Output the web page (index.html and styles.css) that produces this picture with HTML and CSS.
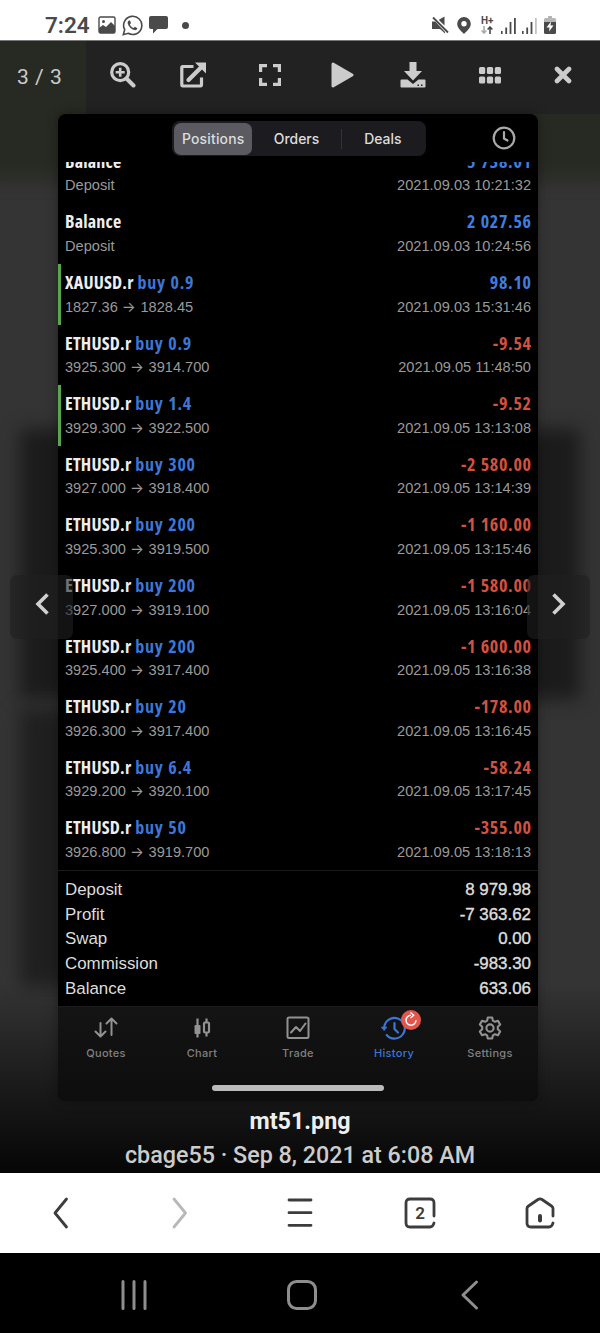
FILE: index.html
```html
<!DOCTYPE html>
<html lang="en">
<head>
    <meta charset="UTF-8">
    <meta name="viewport" content="width=device-width, initial-scale=1.0">
    <title>mt51.png</title>
    <link rel="stylesheet" href="styles.css">
</head>
<body>
    <div class="screen">
        <header class="status-bar">
            <span class="clock">7:24</span>
            <svg class="st-image" width="18" height="18" viewBox="0 0 18 18"><rect x="1" y="1" width="16" height="16" rx="1.5" fill="none" stroke="#4a4a4a" stroke-width="1.4"/><circle cx="5.5" cy="5.5" r="1.5"/><path d="M1 12l4-3 3 2 5-5 4 4v7H1z"/></svg>
            <svg class="st-whatsapp" width="21" height="21" viewBox="0 0 21 21"><path d="M1.3 19.7l1.4-5A9.1 9.1 0 1 1 6.200 18.300z" fill="none" stroke="#4a4a4a" stroke-width="1.6"/><path d="M7 5.500c-1 .5-1.700 1.700-1.200 3.200 1 3 3.500 5.600 6.500 6.400 1.500.4 2.800-.4 3.100-1.800l-2.500-1.500-1.300 1.300c-1.700-.8-3-2-3.700-3.700l1.100-1.300L8 5.500z"/></svg>
            <svg class="st-chat" width="19" height="18" viewBox="0 0 19 18"><path d="M2 0h15q2 0 2 2v9q0 2-2 2H8.500L4 17.500V13H2q-2 0-2-2V2q0-2 2-2z"/></svg>
            <span class="dot"></span>
            <div class="status-right">
                <svg class="st-mute" width="17" height="18" viewBox="0 0 17 18"><path d="M0 5.500h4L13 15v2.500l-5-4.500H0zM6.500 4L12.500 .5v9z"/><path d="M1 .5l15 16" stroke="#fff" stroke-width="3.600"/><path d="M1 1.500l15 15" stroke="#4a4a4a" stroke-width="1.800"/></svg>
                <svg class="st-pin" width="14" height="17" viewBox="0 0 14 17"><path fill-rule="evenodd" d="M7 0a6.800 6.800 0 0 1 6.800 6.800C13.800 11 10 14 7 17 4 14 .2 11 .2 6.800A6.800 6.800 0 0 1 7 0zm0 4a2.700 2.700 0 1 0 0 5.400A2.700 2.700 0 0 0 7 4z"/></svg>
                <div class="net">
                    <span>H+</span>
                    <svg width="12" height="8" viewBox="0 0 12 8" fill="none" stroke-width="1.600"><path d="M3 0v7M.6 4.500L3 7l2.400-2.500" stroke="#aaa"/><path d="M9 8V1M6.600 3.500L9 1l2.400 2.500" stroke="#4a4a4a"/></svg>
                </div>
                <svg class="st-sig" width="15" height="17" viewBox="0 0 15 17"><path d="M0 14h1.600v3H0zM4.300 10.500h1.800v6.500h-1.800zM8.600 5h1.800v12h-1.800zM13 1h1.800v16H13z"/></svg>
                <svg class="st-sig" width="15" height="17" viewBox="0 0 15 17"><path d="M0 14h1.600v3H0zM4.300 10.500h1.800v6.500h-1.800zM8.600 5h1.800v12h-1.800z"/><path d="M13 1h1.800v16H13z" fill="#c4c4c4"/></svg>
                <svg class="st-battery" width="12" height="18" viewBox="0 0 12 18"><path d="M4 0h4v2h2.500Q12 2 12 3.500V7H0V3.500Q0 2 1.500 2H4z" fill="#b5b5b5"/><path d="M0 6h12v10.500q0 1.500-1.500 1.500h-9Q0 18 0 16.500z"/><path d="M7 5.500L2.500 11.500h3L5 15.500l4.500-6h-3z" fill="#fff"/></svg>
            </div>
        </header>

        <main class="viewer">
            <div class="backdrop">
                <div class="shade shade-top"></div>
                <div class="shade shade-mid"></div>
                <div class="shade shade-low"></div>
            </div>

            <nav class="toolbar">
                <div class="counter">3 / 3</div>
                <div class="tool"><svg width="26" height="26" viewBox="0 0 26 26" fill="none" stroke="#ccc"><circle cx="10.200" cy="10.200" r="8.500" stroke-width="3.200"/><path d="M16.500 16.500l7 7" stroke-width="4" stroke-linecap="round"/><path d="M10.200 5.700v9M5.700 10.200h9" stroke-width="2.600"/></svg></div>
                <div class="tool shift"><svg width="26" height="26" viewBox="0 0 26 26" fill="none" stroke="#ccc"><path d="M13.500 4.500H2.700Q1.800 4.500 1.800 5.400V22.600Q1.800 24 2.700 24H20.500Q21.500 24 21.500 22.600V15.500" stroke-width="3.200"/><path d="M8.500 18L22 4.500" stroke-width="4.200" stroke-linecap="round"/><path d="M15 .5h11v11z" fill="#ccc" stroke="none"/></svg></div>
                <div class="tool"><svg width="22" height="22" viewBox="0 0 22 22" fill="none" stroke="#ccc" stroke-width="3.200"><path d="M8 1.600H1.600V8M14 1.600h6.400V8M8 20.400H1.600V14M14 20.400h6.400V14"/></svg></div>
                <div class="tool"><svg width="23" height="26" viewBox="0 0 23 26" fill="#ccc" stroke="#ccc" stroke-width="3" stroke-linejoin="round"><path d="M2 2l19 11L2 24z"/></svg></div>
                <div class="tool shift"><svg width="26" height="26" viewBox="0 0 26 26" fill="#ccc"><path d="M9.500 0h7v9H22l-9 9.500L4 9h5.500z"/><path fill-rule="evenodd" d="M1.500 17.500h6l5.500 4.500 5.500-4.500h6q1 0 1 1v6q0 1-1 1h-23q-1 0-1-1v-6q0-1 1-1zM17.500 22.500h1.500V24h-1.500zm3.500 0h1.500V24H21z"/></svg></div>
                <div class="tool"><svg width="22" height="17" viewBox="0 0 22 17" fill="#ccc"><rect width="6.200" height="7" rx="1.500"/><rect x="7.900" width="6.200" height="7" rx="1.500"/><rect x="15.800" width="6.200" height="7" rx="1.500"/><rect y="9.600" width="6.200" height="7" rx="1.500"/><rect x="7.900" y="9.600" width="6.200" height="7" rx="1.500"/><rect x="15.800" y="9.600" width="6.200" height="7" rx="1.500"/></svg></div>
                <div class="tool"><svg width="18" height="18" viewBox="0 0 18 18" fill="none" stroke="#ccc" stroke-width="4.600" stroke-linecap="round"><path d="M3 3l12 12M15 3L3 15"/></svg></div>
            </nav>

            <section class="photo">
                <div class="photo-head">
                    <div class="segments">
                        <span class="segment active">Positions</span>
                        <span class="segment">Orders</span>
                        <span class="segment last">Deals</span>
                    </div>
                    <svg class="clock-icon" width="24" height="24" viewBox="0 0 24 24" fill="none" stroke="#aaa" stroke-width="2.200" stroke-linecap="round"><circle cx="12" cy="12" r="10.300"/><path d="M12 6v6.500l3.500 2"/></svg>
                </div>

                <div class="deals">
                    <div class="deal"><b>Balance</b><b class="up">5 738.01</b><span>Deposit</span><span>2021.09.03 10:21:32</span></div>
                    <div class="deal"><b>Balance</b><b class="up">2 027.56</b><span>Deposit</span><span>2021.09.03 10:24:56</span></div>
                    <div class="deal marked"><b>XAUUSD.r <i>buy 0.9</i></b><b class="up">98.10</b><span>1827.36 <em>→</em> 1828.45</span><span>2021.09.03 15:31:46</span></div>
                    <div class="deal"><b>ETHUSD.r <i>buy 0.9</i></b><b class="down">-9.54</b><span>3925.300 <em>→</em> 3914.700</span><span>2021.09.05 11:48:50</span></div>
                    <div class="deal marked"><b>ETHUSD.r <i>buy 1.4</i></b><b class="down">-9.52</b><span>3929.300 <em>→</em> 3922.500</span><span>2021.09.05 13:13:08</span></div>
                    <div class="deal"><b>ETHUSD.r <i>buy 300</i></b><b class="down">-2 580.00</b><span>3927.000 <em>→</em> 3918.400</span><span>2021.09.05 13:14:39</span></div>
                    <div class="deal"><b>ETHUSD.r <i>buy 200</i></b><b class="down">-1 160.00</b><span>3925.300 <em>→</em> 3919.500</span><span>2021.09.05 13:15:46</span></div>
                    <div class="deal"><b>ETHUSD.r <i>buy 200</i></b><b class="down">-1 580.00</b><span>3927.000 <em>→</em> 3919.100</span><span>2021.09.05 13:16:04</span></div>
                    <div class="deal"><b>ETHUSD.r <i>buy 200</i></b><b class="down">-1 600.00</b><span>3925.400 <em>→</em> 3917.400</span><span>2021.09.05 13:16:38</span></div>
                    <div class="deal"><b>ETHUSD.r <i>buy 20</i></b><b class="down">-178.00</b><span>3926.300 <em>→</em> 3917.400</span><span>2021.09.05 13:16:45</span></div>
                    <div class="deal"><b>ETHUSD.r <i>buy 6.4</i></b><b class="down">-58.24</b><span>3929.200 <em>→</em> 3920.100</span><span>2021.09.05 13:17:45</span></div>
                    <div class="deal"><b>ETHUSD.r <i>buy 50</i></b><b class="down">-355.00</b><span>3926.800 <em>→</em> 3919.700</span><span>2021.09.05 13:18:13</span></div>
                </div>

                <div class="summary">
                    <div class="sum-row"><span>Deposit</span><strong>8 979.98</strong></div>
                    <div class="sum-row"><span>Profit</span><strong>-7 363.62</strong></div>
                    <div class="sum-row"><span>Swap</span><strong>0.00</strong></div>
                    <div class="sum-row"><span>Commission</span><strong>-983.30</strong></div>
                    <div class="sum-row"><span>Balance</span><strong>633.06</strong></div>
                </div>

                <div class="tabs">
                    <div class="tab">
                        <svg width="26" height="26" viewBox="0 0 26 26" fill="none" stroke="#929292" stroke-width="2" stroke-linecap="round" stroke-linejoin="round"><path d="M7.500 8v13M2.500 16.500l5 5 5-5M18.500 20V4M13.500 8.500l5-5 5 5"/></svg>
                        <span>Quotes</span>
                    </div>
                    <div class="tab">
                        <svg width="26" height="26" viewBox="0 0 26 26" fill="none" stroke="#929292" stroke-width="2.200"><path d="M8.500 3.500v19M17.500 3.500v4M17.500 17.500v4"/><rect x="5.500" y="10" width="6" height="9" rx="1" fill="#929292" stroke="none"/><rect x="15" y="7.500" width="5" height="10" rx="1"/></svg>
                        <span>Chart</span>
                    </div>
                    <div class="tab">
                        <svg width="26" height="26" viewBox="0 0 26 26" fill="none" stroke="#929292" stroke-width="2" stroke-linecap="round" stroke-linejoin="round"><rect x="2.500" y="2.500" width="21" height="20.500" rx="1.500"/><path d="M6 17.500l5-5.500 4 4 5.500-7.500"/></svg>
                        <span>Trade</span>
                    </div>
                    <div class="tab current">
                        <svg width="26" height="26" viewBox="0 0 26 26" fill="none" stroke="#3b76d8" stroke-width="2.200" stroke-linecap="round" stroke-linejoin="round"><path d="M3.200 12.500a10.300 10.300 0 1 1 2.500 7.500"/><path d="M.8 12.200h5l-2.500 3z" fill="#3b76d8" stroke-width="1"/><path d="M13.500 8v6l3.500 3.500"/></svg>
                        <svg class="badge" width="20" height="20" viewBox="0 0 20 20" fill="none"><circle cx="10" cy="10" r="10" fill="#e2574c"/><path d="M10 5.200a5 5 0 1 0 5 5" stroke="#fff" stroke-width="1.500"/><path d="M9.500 2.600l3.200 2.700-3.200 2.700" stroke="#fff" stroke-width="1.300"/></svg>
                        <span>History</span>
                    </div>
                    <div class="tab">
                        <svg width="26" height="26" viewBox="0 0 26 26" fill="none" stroke="#929292" stroke-width="2.100" stroke-linejoin="round"><path d="M10.800 2.500h4.400l.7 3.200 2 1.100 3.100-1 2.200 3.800-2.400 2.200v2.400l2.400 2.200-2.200 3.800-3.100-1-2 1.100-.7 3.200h-4.400l-.7-3.200-2-1.100-3.100 1-2.200-3.800 2.400-2.200v-2.400L2.800 9.600 5 5.800l3.100 1 2-1.100z"/><circle cx="13" cy="13" r="3.600"/></svg>
                        <span>Settings</span>
                    </div>
                </div>
                <div class="home-line"></div>
            </section>

            <div class="caption">
                <h1>mt51.png</h1>
                <p>cbage55 · Sep 8, 2021 at 6:08 AM</p>
            </div>

            <div class="arrow prev"><svg width="14" height="22" viewBox="0 0 14 22" fill="none" stroke="#d0d0d0" stroke-width="3.600"><path d="M12.500 1.500L3 11l9.500 9.500"/></svg></div>
            <div class="arrow next"><svg width="14" height="22" viewBox="0 0 14 22" fill="none" stroke="#d0d0d0" stroke-width="3.600"><path d="M1.500 1.500L11 11l-9.500 9.500"/></svg></div>
        </main>

        <nav class="browser-bar">
            <svg width="32" height="32" viewBox="0 0 32 32"><path d="M22.500 2L11 16l11.500 14"/></svg>
            <svg class="muted" width="32" height="32" viewBox="0 0 32 32"><path d="M10 2l11.500 14L10 30"/></svg>
            <svg width="32" height="32" viewBox="0 0 32 32"><path d="M5 3h22M5 15.700h22M5 28.300h22"/></svg>
            <div class="tab-count">
                <svg width="32" height="32" viewBox="0 0 32 32"><path d="M30 19V6q0-4-4-4H6Q2 2 2 6v20q0 4 4 4h20q3 0 4-4"/></svg>
                <span>2</span>
            </div>
            <svg width="32" height="32" viewBox="0 0 32 32"><path d="M29 19v-7.500q0-1.500-1.500-2.500L18 2.500q-2-1.300-4 0L4.500 9Q3 10 3 11.500V26q0 4 4 4h18q3 0 4-4"/><path d="M16 19v4.500" stroke-width="4"/></svg>
        </nav>

        <nav class="system-bar">
            <svg width="32" height="32" viewBox="0 0 32 32"><path d="M5 2.500v27M16 2.500v27M27 2.500v27"/></svg>
            <svg width="32" height="32" viewBox="0 0 32 32"><rect x="2.500" y="2.500" width="27" height="27" rx="8"/></svg>
            <svg width="32" height="32" viewBox="0 0 32 32"><path d="M22.500 3L9 16l13.500 13"/></svg>
        </nav>
    </div>
</body>
</html>
```
FILE: styles.css
```css
* {
    margin: 0;
    padding: 0;
    box-sizing: border-box;
}

body {
    background: #000;
    font-family: Roboto, sans-serif;
}

svg {
    display: block;
    flex: none;
}

.screen {
    width: 600px;
    height: 1333px;
    display: flex;
    flex-direction: column;
    overflow: hidden;
}

/* phone status bar */
.status-bar {
    height: 41px;
    padding: 10px 44px 0 45px;
    background: #fff;
    border-bottom: 1px solid #777;
    display: flex;
    align-items: center;
    color: #4a4a4a;
    fill: #4a4a4a;
}

.clock {
    width: 53px;
    font-size: 22.5px;
    font-weight: 600;
    line-height: 30px;
}

.st-whatsapp { margin-left: 6px; }
.st-chat { margin-left: 6px; }

.dot {
    width: 7px;
    height: 7px;
    margin-left: 14px;
    border-radius: 50%;
    background: #4a4a4a;
}

.status-right {
    margin-left: auto;
    display: flex;
    align-items: center;
}

.st-pin { margin-left: 8px; }
.st-sig { margin-left: 6px; }
.st-battery { margin-left: 7px; }

.net {
    width: 14px;
    margin: 0 0 0 10px;
    font-size: 10px;
    font-weight: 700;
    line-height: 10px;
}

/* lightbox */
.viewer {
    position: relative;
    height: 1132px;
    background: #343434;
    display: flex;
    flex-direction: column;
    align-items: center;
    overflow: hidden;
}

.backdrop {
    position: absolute;
    inset: 0;
}

.backdrop::after {
    content: "";
    position: absolute;
    inset: auto 0 0 0;
    height: 190px;
    background: linear-gradient(rgba(0, 0, 0, 0), rgba(0, 0, 0, 0.55) 60%, #060606);
}

.shade {
    position: absolute;
    filter: blur(9px);
}

.shade-top {
    inset: -20px -20px auto -20px;
    height: 158px;
    background: #272a22;
}

.shade-mid {
    left: 20px;
    right: 20px;
    top: 388px;
    height: 270px;
    background: #1b1b1b;
}

.shade-low {
    left: 20px;
    right: 90px;
    top: 668px;
    height: 278px;
    background: #1f1f1f;
}

.toolbar {
    position: relative;
    width: 100%;
    height: 73px;
    display: flex;
}

.counter {
    width: 86px;
    padding-left: 17px;
    color: #ccc;
    font-size: 21px;
    letter-spacing: 0.5px;
    line-height: 72px;
}

.tool {
    flex: 1;
    padding-bottom: 5px;
    background: #222;
    display: flex;
    align-items: center;
    justify-content: center;
}

.tool.shift svg {
    margin-right: 7px;
}

.photo {
    position: relative;
    width: 480px;
    height: 987px;
    margin-right: 4px;
    background: #000;
    border-radius: 8px;
    overflow: hidden;
    box-shadow: 0 0 12px rgba(0, 0, 0, 0.35);
    display: flex;
    flex-direction: column;
}

.photo-head {
    height: 48px;
    padding: 7px 22px 0 114px;
    display: flex;
    justify-content: space-between;
}

.segments {
    width: 254px;
    height: 35px;
    padding: 2px;
    background: #1c1c20;
    border-radius: 8px;
    display: flex;
    align-items: center;
    font-family: Inter, sans-serif;
    font-size: 13.9px;
    font-weight: 500;
    color: #ddd;
}

.segment {
    width: 89px;
    text-align: center;
    line-height: 20px;
}

.segment.active {
    width: 79px;
    line-height: 32px;
    letter-spacing: 0.2px;
    background: #5a5a60;
    border-radius: 7px;
}

.segment.last {
    width: 84px;
    border-left: 1px solid #333337;
}

.clock-icon {
    margin-top: 5px;
}

.deals {
    height: 709px;
    display: flex;
    flex-direction: column;
    justify-content: flex-end;
    overflow: hidden;
    border-bottom: 1px solid #1a1a1a;
}

.deal {
    flex: none;
    height: 60.6px;
    padding: 6px 7px 0 4px;
    border-left: 3px solid transparent;
    display: grid;
    grid-template-columns: 1fr auto;
    grid-template-rows: 24.5px 24px;
    line-height: 24px;
    font-family: "Liberation Sans", sans-serif;
    font-size: 14.6px;
    color: #9a9a9a;
}

.deal.marked {
    border-left-color: #58a64b;
}

.deal b {
    font-family: "Open Sans", sans-serif;
    font-size: 18px;
    font-stretch: 75%;
    font-weight: 680;
    letter-spacing: 0.2px;
    color: #eee;
}

.deal i {
    margin-left: 0.5px;
    font-style: normal;
    letter-spacing: 0.7px;
    word-spacing: 1px;
    color: #3b76d8;
}

.deal em {
    display: inline-block;
    width: 14.6px;
    font-family: Inter, sans-serif;
    font-style: normal;
    line-height: 20px;
}

.deal .up,
.deal .down {
    margin-right: -0.7px;
    letter-spacing: 0.7px;
    word-spacing: 0.5px;
    text-align: right;
    color: #3f7de0;
}

.deal .down {
    color: #d2513f;
}

.summary {
    height: 135px;
    padding: 7px 7px 0;
    font-family: "Liberation Sans", sans-serif;
    font-size: 16.9px;
    line-height: 24.7px;
    color: #ddd;
}

.sum-row {
    display: flex;
    justify-content: space-between;
}

.sum-row strong {
    font-weight: 400;
    -webkit-text-stroke: 0.4px #ddd;
}

.tabs {
    flex: 1;
    padding-top: 8px;
    background: linear-gradient(#141414, #0d0d0d);
    border-top: 1px solid #1c1c1c;
    display: flex;
}

.tab {
    position: relative;
    width: 96px;
    display: flex;
    flex-direction: column;
    align-items: center;
    font-family: Inter, sans-serif;
    font-size: 11px;
    font-weight: 500;
    letter-spacing: 0.3px;
    line-height: 24px;
    color: #808080;
}

.tab.current {
    color: #3b76d8;
}

.badge {
    position: absolute;
    left: 55px;
    top: -5px;
}

.home-line {
    position: absolute;
    left: 154px;
    bottom: 10px;
    width: 172px;
    height: 6px;
    border-radius: 3px;
    background: #bbb;
}

.caption {
    position: relative;
    text-align: center;
    white-space: nowrap;
    color: #ccc;
    padding-top: 3px;
}

.caption h1 {
    font-size: 23.3px;
    font-weight: 700;
    line-height: 34px;
    color: #eee;
}

.caption p {
    font-size: 23.3px;
    font-weight: 500;
    line-height: 34px;
}

.arrow {
    position: absolute;
    top: 534px;
    width: 63px;
    height: 64px;
    padding-bottom: 6px;
    border-radius: 7px;
    background: rgba(32, 32, 32, 0.6);
    display: flex;
    align-items: center;
    justify-content: center;
}

.prev { left: 10px; }
.next { right: 10px; }

/* browser bottom bar */
.browser-bar {
    height: 80px;
    background: #fff;
    display: flex;
    align-items: center;
    justify-content: space-around;
    fill: none;
    stroke: #3c3c3c;
    stroke-width: 2.8;
    stroke-linecap: round;
    stroke-linejoin: round;
}

.browser-bar .muted {
    stroke: #b8b8b8;
}

.tab-count {
    display: grid;
    place-items: center;
}

.tab-count > * {
    grid-area: 1 / 1;
}

.tab-count span {
    font-size: 17px;
    font-weight: 600;
    color: #3c3c3c;
}

.system-bar {
    height: 80px;
    padding: 4px 46px 0 50px;
    background: #000;
    display: flex;
    align-items: center;
    justify-content: space-around;
    fill: none;
    stroke: #8e8e8e;
    stroke-width: 3;
    stroke-linecap: round;
    stroke-linejoin: round;
}
```
